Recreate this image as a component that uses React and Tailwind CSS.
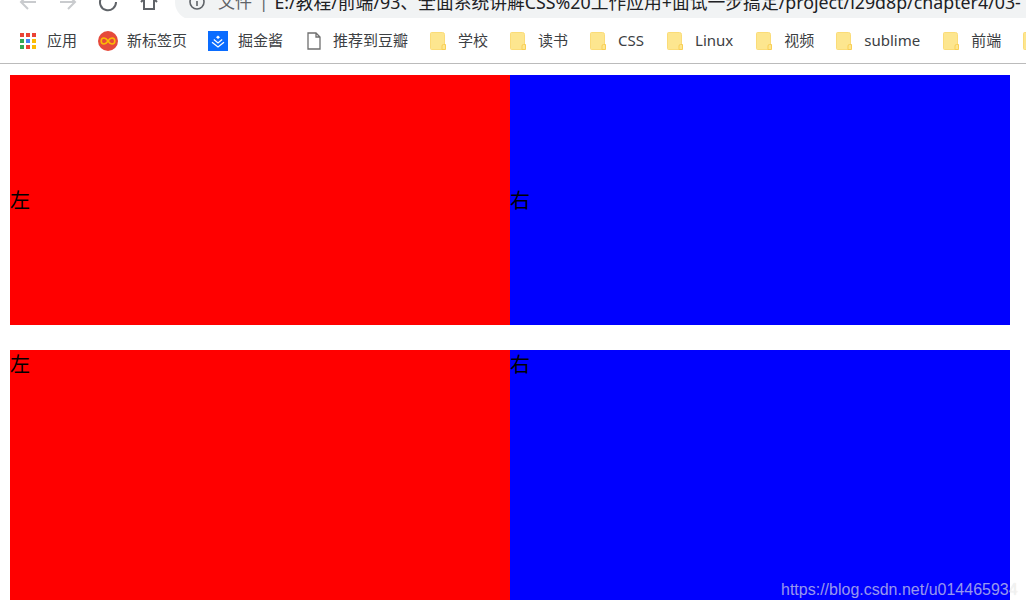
import React from "react";

const cjk = `font-['Noto_Sans','Noto_Sans_CJK_SC',sans-serif]`;

function Folder() {
  return (
    <svg width="16" height="18" viewBox="0 0 16 18" className="shrink-0">
      <path d="M1.5 0.5H12.5Q14.5 0.5 14.5 2.5V17.5H1.5Q0.5 17.5 0.5 16.5V1.5Q0.5 0.5 1.5 0.5Z" fill="#fde68f" stroke="#fbdc78" />
      <path d="M12 17.5V14Q12 12.5 13.5 12.5H15.5V17.5Z" fill="#fde68f" stroke="#f9cf55" />
    </svg>
  );
}

function Apps() {
  const c = ["#ea4335", "#ea4335", "#ea4335", "#34a853", "#4285f4", "#fbbc05", "#34a853", "#ea4335", "#fbbc05"];
  return (
    <div className="grid grid-cols-3 gap-[2px] w-4 h-4 shrink-0">
      {c.map((x, i) => (
        <svg key={i} width="4" height="4" viewBox="0 0 4 4"><rect width="4" height="4" fill={x} /></svg>
      ))}
    </div>
  );
}

function Infinity_() {
  return (
    <svg width="20" height="20" viewBox="0 0 20 20" className="shrink-0">
      <circle cx="10" cy="10" r="10" fill="#e64a3b" />
      <path d="M10 10C8.5 7.8 7.3 7 6 7C4.3 7 3.2 8.3 3.2 10C3.2 11.7 4.3 13 6 13C7.3 13 8.5 12.2 10 10C11.5 7.8 12.7 7 14 7C15.7 7 16.8 8.3 16.8 10C16.8 11.7 15.7 13 14 13C12.7 13 11.5 12.2 10 10Z" fill="none" stroke="#fbbc05" strokeWidth="1.6" />
    </svg>
  );
}

function Juejin() {
  return (
    <svg width="20" height="20" viewBox="0 0 20 20" className="shrink-0">
      <rect width="20" height="20" fill="#0a6cff" />
      <path d="M10 4.5L12 6.2L10 7.9L8 6.2Z" fill="#fff" />
      <path d="M5.8 8.6L10 12L14.2 8.6M4 11.2L10 16L16 11.2" fill="none" stroke="#fff" strokeWidth="1.3" />
    </svg>
  );
}

function Doc() {
  return (
    <svg width="14" height="18" viewBox="0 0 14 18" className="shrink-0">
      <path d="M1 1H9L13 5V17H1Z M9 1V5H13" fill="#fff" stroke="#6f6f6f" strokeWidth="1.3" />
    </svg>
  );
}

const items = [
  { icon: <Apps />, t: "应用", gap: "gap-[11px]", ml: "ml-5" },
  { icon: <Infinity_ />, t: "新标签页", gap: "gap-[9px]", ml: "ml-[21px]" },
  { icon: <Juejin />, t: "掘金酱", gap: "gap-[10px]", ml: "ml-[21px]" },
  { icon: <Doc />, t: "推荐到豆瓣", gap: "gap-3", ml: "ml-6" },
  { icon: <Folder />, t: "学校", gap: "gap-3", ml: "ml-[22px]" },
  { icon: <Folder />, t: "读书", gap: "gap-3", ml: "ml-[22px]" },
  { icon: <Folder />, t: "CSS", gap: "gap-3", ml: "ml-[22px]" },
  { icon: <Folder />, t: "Linux", gap: "gap-3", ml: "ml-[23px]" },
  { icon: <Folder />, t: "视频", gap: "gap-3", ml: "ml-[23px]" },
  { icon: <Folder />, t: "sublime", gap: "gap-3", ml: "ml-[22px]" },
  { icon: <Folder />, t: "前端", gap: "gap-3", ml: "ml-[23px]" },
  { icon: <Folder />, t: "", gap: "gap-0", ml: "ml-[22px]" },
];

function Block({ align }) {
  return (
    <div className="flex h-[250px] w-[1000px] text-[20px] leading-[28px] text-black font-['Noto_Sans_CJK_SC',sans-serif] font-normal">
      <div className={`flex-1 bg-[#ff0000] flex ${align}`}>左</div>
      <div className={`flex-1 bg-[#0000ff] flex ${align}`}>右</div>
    </div>
  );
}

export default function App() {
  return (
    <div className={`relative w-[1026px] h-[610px] overflow-hidden bg-white ${cjk}`}>
      <div className="h-[18px] overflow-hidden">
        <div className="flex items-center h-9 -mt-[16px]">
          <div className="flex items-center ml-[18px] w-[157px]">
            <svg width="20" height="20" viewBox="0 0 20 20" className="shrink-0" fill="none" stroke="#c9cbce" strokeWidth="2"><path d="M18 10H3M10 3L3 10L10 17" /></svg>
            <svg width="20" height="20" viewBox="0 0 20 20" className="shrink-0 ml-[20px]" fill="none" stroke="#c9cbce" strokeWidth="2"><path d="M2 10H17M10 3L17 10L10 17" /></svg>
            <svg width="20" height="20" viewBox="0 0 20 20" className="shrink-0 ml-[20px]" fill="none" stroke="#5f6368" strokeWidth="2"><path d="M16 5A8 8 0 1 0 18 10M17 1V6H12" /></svg>
            <svg width="20" height="20" viewBox="0 0 20 20" className="shrink-0 ml-[21px]" fill="none" stroke="#5f6368" strokeWidth="2"><path d="M2 10L10 2L18 10M5 8V17H15V8" /></svg>
          </div>
          <div className="flex items-center h-[52px] -mt-[16px] pt-[16px] flex-1 bg-[#f1f3f4] rounded-l-[18px] pl-[14px] whitespace-nowrap overflow-hidden">
            <svg width="16" height="16" viewBox="0 0 16 16" className="shrink-0" fill="none" stroke="#5f6368" strokeWidth="1.6"><circle cx="8" cy="8" r="7" /><path d="M8 7V12M8 4V5.6" /></svg>
            <span className="ml-[13px] text-[17px] text-[#5f6368]">文件</span>
            <span className="ml-[7px] text-[17px] text-[#5f6368]">|</span>
            <span className="ml-[6px] text-[17.8px] text-[#202124]">E:/教程/前端/93、全面系统讲解CSS%20工作应用+面试一步搞定/project/l29d8p/chapter4/03-</span>
          </div>
        </div>
      </div>
      <div className="flex items-center h-[45px] border-b border-[#bbbbbb] box-content text-[15px] text-[#3c4043] whitespace-nowrap overflow-hidden">
        {items.map((it, i) => (
          <div key={i} className={`flex items-center shrink-0 ${it.gap} ${it.ml}`}>
            {it.icon}
            {it.t && <span>{it.t}</span>}
          </div>
        ))}
      </div>
      <div className="pt-[11px] px-[10px] flex flex-col gap-[25px]">
        <Block align="items-center" />
        <Block align="items-start" />
      </div>
      <div className="absolute left-[781px] top-[581px] text-[16px] leading-[18px] whitespace-nowrap font-['Liberation_Sans',sans-serif] text-[#ffffff99] [text-shadow:0_0_1px_rgba(0,0,0,0.15)]">
        https://blog.csdn.net/u014465934
      </div>
    </div>
  );
}
